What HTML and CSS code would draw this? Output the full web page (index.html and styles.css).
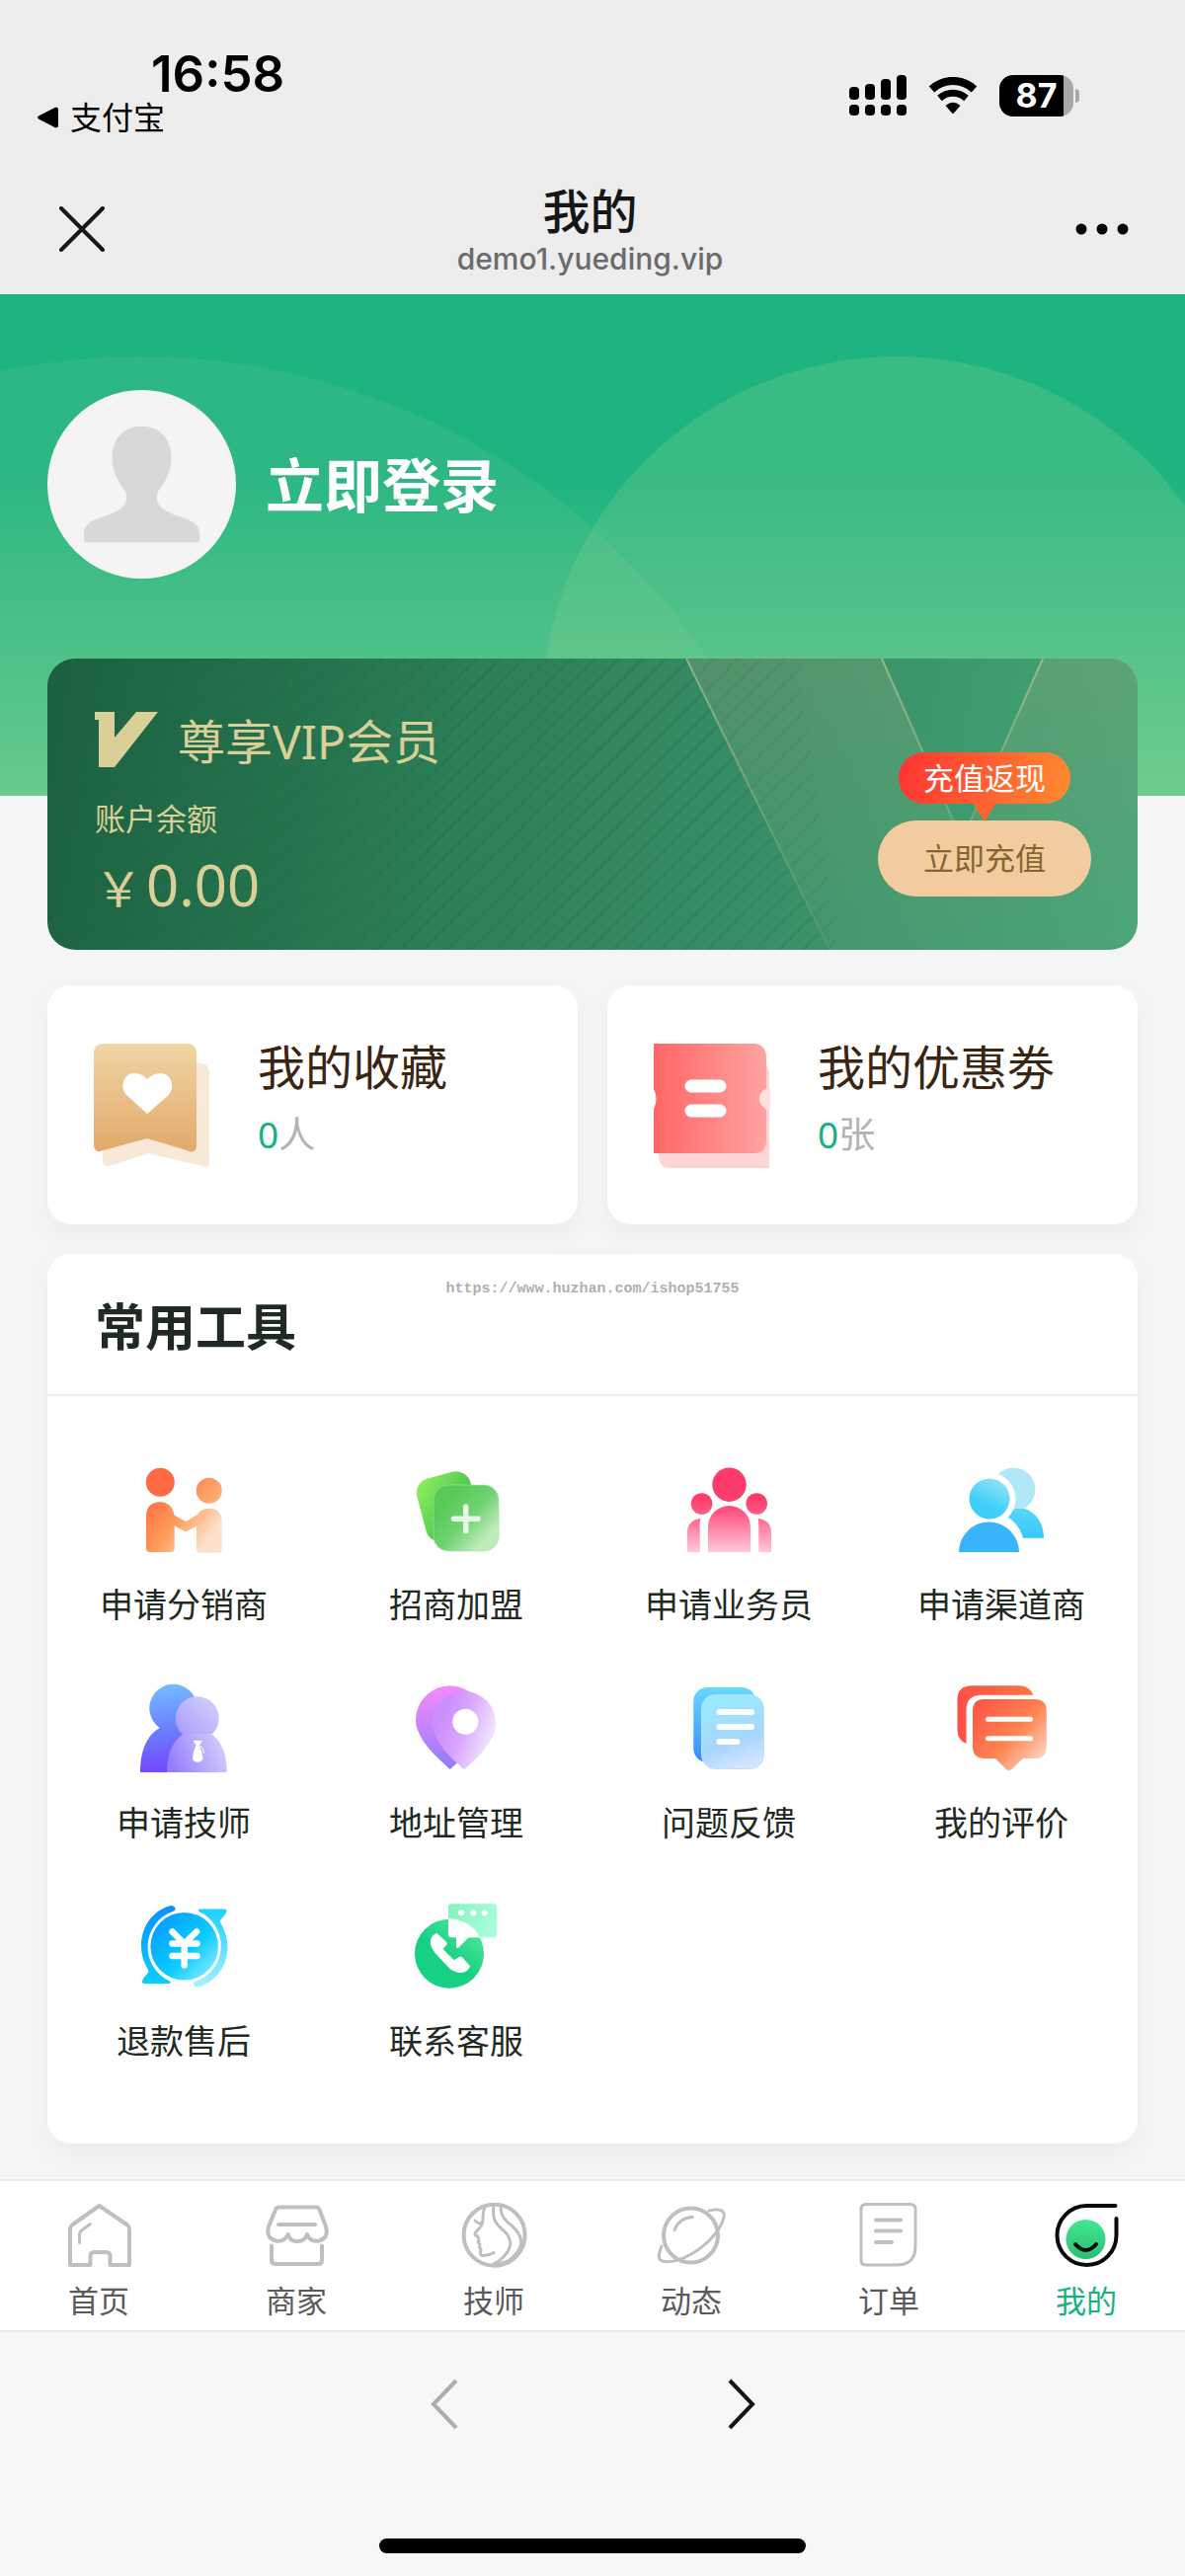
FILE: index.html
```html
<!DOCTYPE html>
<html lang="zh-CN">
<head>
    <meta charset="UTF-8">
    <meta name="viewport" content="width=device-width, initial-scale=1.0">
    <title>我的</title>
    <link rel="stylesheet" href="styles.css">
</head>
<body>

<header class="top">
    <div class="status-bar">
        <div class="status-left">
            <div class="time">16:58</div>
            <a class="back-app" href="#">
                <svg width="21" height="22" viewBox="0 0 21 22"><path d="M1 9.5L18 .8Q21 0 21 3V19Q21 22 18 21.2L1 12.5Q-.8 11 1 9.5Z" fill="#000"/></svg>
                支付宝
            </a>
        </div>
        <div class="status-right">
            <svg width="58" height="42" viewBox="0 0 58 42">
                <rect x="0" y="12" width="10" height="13" rx="4"/>
                <rect x="16" y="9" width="10" height="16" rx="4"/>
                <rect x="32" y="4" width="10" height="21" rx="4"/>
                <rect x="48" y="0" width="10" height="25" rx="4"/>
                <rect x="0" y="30" width="10" height="11" rx="4"/>
                <rect x="16" y="30" width="10" height="11" rx="4"/>
                <rect x="32" y="30" width="10" height="11" rx="4"/>
                <rect x="48" y="30" width="10" height="11" rx="4"/>
            </svg>
            <svg width="50" height="38" viewBox="0 0 50 38">
                <path d="M3.5 12.5C15.5 1 34.5 1 46.5 12.5" fill="none" stroke="#000" stroke-width="8"/>
                <path d="M11.5 21.5C19.5 14.5 30.5 14.5 38.5 21.5" fill="none" stroke="#000" stroke-width="7"/>
                <path d="M17.5 29Q25 22.5 32.5 29L26 36.5Q25 37.5 24 36.5Z" fill="#000"/>
            </svg>
            <div class="battery"><span>87</span></div>
        </div>
    </div>
    <div class="nav-bar">
        <button class="icon-btn" aria-label="关闭">
            <svg width="46" height="46" viewBox="0 0 46 46"><path d="M2 2L44 44M44 2L2 44" stroke="#161616" stroke-width="4" stroke-linecap="round"/></svg>
        </button>
        <div class="nav-title">
            <h1>我的</h1>
            <p>demo1.yueding.vip</p>
        </div>
        <button class="icon-btn" aria-label="更多">
            <svg width="54" height="12" viewBox="0 0 54 12"><circle cx="6" cy="6" r="5.5"/><circle cx="27" cy="6" r="5.5"/><circle cx="48" cy="6" r="5.5"/></svg>
        </button>
    </div>
</header>

<main>
    <section class="hero">
        <svg class="hero-bg" viewBox="0 0 1200 507" preserveAspectRatio="xMidYMid slice">
            <circle cx="143" cy="754" r="691" fill="#8fcf95" fill-opacity=".13"/>
            <circle cx="907" cy="421" r="358" fill="#a5d795" fill-opacity=".2"/>
        </svg>
        <a class="login" href="#">
            <svg class="avatar" viewBox="0 0 192 192">
                <circle cx="96" cy="96" r="96" fill="#f4f4f4"/>
                <path d="M96 37C114 37 126 49 126 69C126 84 119 95 112 104C109 120 120 124 138 130C150 134 155 139 155 147V152Q155 155 152 155H40Q37 155 37 152V147C37 139 42 134 54 130C72 124 83 120 80 104C73 95 66 84 66 69C66 49 78 37 96 37Z" fill="#d8d8d8"/>
            </svg>
            立即登录
        </a>
    </section>

    <section class="vip">
        <svg class="vip-bg" viewBox="0 0 1104 295" preserveAspectRatio="xMaxYMid slice">
            <defs>
                <pattern id="lines" width="17" height="17" patternUnits="userSpaceOnUse" patternTransform="rotate(45)">
                    <rect width="3" height="17" fill="#1c5c42" fill-opacity=".16"/>
                </pattern>
                <linearGradient id="vBand" x1="0" y1="0" x2="0" y2="1">
                    <stop offset="0" stop-color="#a9a67c" stop-opacity=".26"/>
                    <stop offset="1" stop-color="#6fae7c" stop-opacity=".16"/>
                </linearGradient>
                <linearGradient id="vEdge" x1="0" y1="0" x2="0" y2="1">
                    <stop offset="0" stop-color="#d0cb98" stop-opacity=".6"/>
                    <stop offset="1" stop-color="#8fb98b" stop-opacity=".15"/>
                </linearGradient>
            </defs>
            <path d="M0 0H760L800 295H0Z" fill="url(#lines)"/>
            <path d="M647 0H845L926 184L1008 0H1104V295H792Z" fill="url(#vBand)"/>
            <path d="M647 0L792 295M845 0L926 184M1008 0L926 184" fill="none" stroke="url(#vEdge)" stroke-width="2"/>
        </svg>
        <div class="vip-info">
            <h2>
                <svg width="64" height="56" viewBox="0 0 64 56"><path d="M0 0H20V26L42 0H64L20 56H4V8H0Z" fill="#dacf97"/></svg>
                尊享VIP会员
            </h2>
            <p class="balance-label">账户余额</p>
            <p class="balance"><span>￥</span>0.00</p>
        </div>
        <div class="recharge">
            <span class="bubble">充值返现</span>
            <button class="recharge-btn">立即充值</button>
        </div>
    </section>

    <section class="cards">
        <a class="card" href="#">
            <svg width="118" height="126" viewBox="0 0 118 126">
                <defs>
                    <linearGradient id="gold" x1="0" y1="0" x2="0" y2="1"><stop offset="0" stop-color="#f1d5a6"/><stop offset="1" stop-color="#e1aa6a"/></linearGradient>
                </defs>
                <path d="M9 20H108Q117 20 117 30V120Q117 127 110 124L55 111L16 124Q9 125 9 117Z" fill="#f8e8d8"/>
                <path d="M10 0H94Q104 0 104 10V102Q104 113 94 108L54 96L10 108Q0 112 0 102V10Q0 0 10 0Z" fill="url(#gold)"/>
                <path d="M54 71L33 52C26 44 30 30 41 30Q49 30 54 36Q60 30 67 30C78 30 83 43 76 52Z" fill="#fff"/>
            </svg>
            <span class="card-text">
                <strong>我的收藏</strong>
                <span class="count"><b>0</b>人</span>
            </span>
        </a>
        <a class="card" href="#">
            <svg width="118" height="126" viewBox="0 0 118 126">
                <defs>
                    <linearGradient id="coral" x1="0" y1="0" x2="1" y2="0"><stop offset="0" stop-color="#ff6766"/><stop offset="1" stop-color="#ffa3a1"/></linearGradient>
                </defs>
                <path d="M5 20H108Q117 20 117 32V126H16Q5 126 5 112Z" fill="#fed4d5"/>
                <path d="M0 0H103Q114 2 114 14V98Q114 110 103 111H0V66Q5 56 0 46Z" fill="url(#coral)"/>
                <path d="M118 45A11 11 0 1 0 118 67Z" fill="#fee0e0"/>
                <path d="M38 43H67M38 68H67" stroke="#fff" stroke-width="13" stroke-linecap="round"/>
            </svg>
            <span class="card-text">
                <strong>我的优惠劵</strong>
                <span class="count"><b>0</b>张</span>
            </span>
        </a>
    </section>

    <section class="tools">
        <h2>常用工具</h2>
        <span class="watermark">https://www.huzhan.com/ishop51755</span>
        <div class="tool-grid">
            <a class="tool" href="#">
                <svg viewBox="0 0 108 108">
                    <defs>
                        <linearGradient id="t1" gradientUnits="userSpaceOnUse" x1="18" y1="38" x2="86" y2="88"><stop offset="0" stop-color="#fe6a44"/><stop offset=".48" stop-color="#fd9f5c"/><stop offset=".9" stop-color="#fde0c9"/></linearGradient>
                        <linearGradient id="t1b" x1="0" y1="0" x2="1" y2="1"><stop offset="0" stop-color="#fd8b4e"/><stop offset="1" stop-color="#feb57a"/></linearGradient>
                    </defs>
                    <circle cx="30.3" cy="26.3" r="14.5" fill="#fe6b43"/>
                    <circle cx="79.7" cy="34.7" r="13" fill="url(#t1b)"/>
                    <path d="M16 61Q16 46.3 30.3 46.3Q42 46.5 44.7 59.7L56.3 66L68 59Q72 52.7 80 52.7Q92.7 53 92.7 66V94Q92.7 97.5 89.2 97.5H70.5Q67 97.5 67 94V71L58 75.5Q56 76.5 54 75.5L44.7 70.3V93.5Q44.7 97 41.2 97H19.5Q16 97 16 93.5Z" fill="url(#t1)"/>
                </svg>
                申请分销商
            </a>
            <a class="tool" href="#">
                <svg viewBox="0 0 108 108">
                    <defs>
                        <linearGradient id="t2" x1="0" y1="0" x2=".7" y2=".8"><stop offset="0" stop-color="#93f45e"/><stop offset="1" stop-color="#3fb950"/></linearGradient>
                        <linearGradient id="t2b" x1=".25" y1=".2" x2="1" y2=".9"><stop offset="0" stop-color="#58cb57"/><stop offset=".4" stop-color="#70d172"/><stop offset=".8" stop-color="#bdebba"/></linearGradient>
                    </defs>
                    <rect x="18" y="18" width="56" height="66" rx="15" fill="url(#t2)" transform="rotate(-15 46 51)"/>
                    <rect x="31" y="29" width="66" height="67" rx="15" fill="url(#t2b)" stroke="#a5e3a3" stroke-opacity=".6"/>
                    <path d="M63.7 51V75.5M51.5 63.3H76" stroke="#e6f8e5" stroke-width="5.5" stroke-linecap="round"/>
                </svg>
                招商加盟
            </a>
            <a class="tool" href="#">
                <svg viewBox="0 0 108 108">
                    <defs>
                        <linearGradient id="t3" gradientUnits="userSpaceOnUse" x1="0" y1="42" x2="0" y2="97"><stop offset="0" stop-color="#fe3c6c"/><stop offset=".3" stop-color="#fe5c86"/><stop offset="1" stop-color="#fec9da"/></linearGradient>
                    </defs>
                    <g fill="url(#t3)">
                        <circle cx="54.5" cy="28.7" r="17.2"/>
                        <circle cx="26.6" cy="48" r="10.8"/>
                        <circle cx="82.2" cy="48" r="10.8"/>
                        <path d="M33 97V71.5A21.5 21.5 0 0 1 76 71.5V97Z"/>
                        <path d="M12 97V77Q12 65 25.5 62.7Q24.7 65 24.7 70V97Z"/>
                        <path d="M97 97V77Q97 65 83.5 62.7Q84.3 65 84.3 70V97Z"/>
                    </g>
                </svg>
                申请业务员
            </a>
            <a class="tool" href="#">
                <svg viewBox="0 0 108 108">
                    <defs>
                        <linearGradient id="t4" x1=".8" y1="0" x2=".3" y2="1"><stop offset="0" stop-color="#93e5f7"/><stop offset=".7" stop-color="#3fcdf9"/></linearGradient>
                        <linearGradient id="t4b" x1="0" y1="0" x2="0" y2="1"><stop offset="0" stop-color="#55d8f8"/><stop offset="1" stop-color="#38c6fb"/></linearGradient>
                    </defs>
                    <circle cx="66.4" cy="33.5" r="22" fill="#b0e8f8"/>
                    <path d="M58 60L68 53H77.7C90 57 97 69 97 82.7H76C74 75 69 67 61 62Z" fill="url(#t4b)"/>
                    <circle cx="42" cy="43" r="26.5" fill="#fff"/>
                    <circle cx="42" cy="43" r="20.5" fill="url(#t4)"/>
                    <path d="M11 97A30.5 30.5 0 0 1 72 97Z" fill="#3ab3fd"/>
                </svg>
                申请渠道商
            </a>
            <a class="tool" href="#">
                <svg viewBox="0 0 108 108">
                    <defs>
                        <linearGradient id="t5" gradientUnits="userSpaceOnUse" x1="36" y1="10" x2="46" y2="99"><stop offset="0" stop-color="#76bbff"/><stop offset=".5" stop-color="#6a80fe"/><stop offset="1" stop-color="#7444ff"/></linearGradient>
                        <linearGradient id="t5b" gradientUnits="userSpaceOnUse" x1="90" y1="45" x2="40" y2="95"><stop offset="0" stop-color="#c9c6fe"/><stop offset=".4" stop-color="#b3a8fd"/><stop offset="1" stop-color="#9170fd"/></linearGradient>
                        <linearGradient id="t5c" gradientUnits="userSpaceOnUse" x1="97" y1="65" x2="40" y2="90"><stop offset="0" stop-color="#d8d0fd"/><stop offset=".5" stop-color="#b9a9fc"/><stop offset="1" stop-color="#957bfd"/></linearGradient>
                    </defs>
                    <path d="M29.7 54A24.3 24.3 0 1 1 60 52V99H10C10 78 16 62 29.7 54Z" fill="url(#t5)"/>
                    <circle cx="67.7" cy="44.3" r="22" fill="url(#t5b)"/>
                    <path d="M37 99C37 80 43 67 54 60H81.7C92 67 97.7 80 97.7 99Z" fill="url(#t5c)"/>
                    <path d="M63.5 67H73L70 71.5Q73.5 80 73.5 86Q68 92 63 86Q63 79 66.5 71.5Z" fill="#fff"/>
                    <path d="M71 72Q75 76 74.5 80" fill="none" stroke="#fff"/>
                </svg>
                申请技师
            </a>
            <a class="tool" href="#">
                <svg viewBox="0 0 108 108">
                    <defs>
                        <linearGradient id="t6" x1=".5" y1="0" x2=".5" y2="1"><stop offset="0" stop-color="#f58aff"/><stop offset=".5" stop-color="#c583fb"/><stop offset="1" stop-color="#8e7cfb"/></linearGradient>
                        <linearGradient id="t6b" x1=".15" y1=".3" x2=".9" y2=".6"><stop offset="0" stop-color="#cd8dfd"/><stop offset=".45" stop-color="#d9a5fd"/><stop offset="1" stop-color="#f1e0fd"/></linearGradient>
                    </defs>
                    <path d="M47.7 96C36 85 13 66 13 46A34.7 34.7 0 0 1 82.4 46C82.4 66 59 86 47.7 96Z" fill="url(#t6)"/>
                    <path d="M62 96C51 87 30 68 30 49A32 32 0 0 1 94 49C94 68 73 87 62 96Z" fill="url(#t6b)"/>
                    <circle cx="63.3" cy="47.7" r="13" fill="#fff"/>
                </svg>
                地址管理
            </a>
            <a class="tool" href="#">
                <svg viewBox="0 0 108 108">
                    <defs>
                        <linearGradient id="t7" x1="0" y1="0" x2="0" y2="1"><stop offset="0" stop-color="#67d9fd"/><stop offset="1" stop-color="#368afd"/></linearGradient>
                        <linearGradient id="t7b" x1=".3" y1="0" x2=".6" y2="1"><stop offset="0" stop-color="#98ecfd"/><stop offset=".65" stop-color="#a8d5fe"/><stop offset="1" stop-color="#d5e5fe"/></linearGradient>
                    </defs>
                    <rect x="18.3" y="13" width="63" height="76" rx="14" fill="url(#t7)"/>
                    <rect x="26.5" y="20.5" width="63" height="75" rx="14" fill="url(#t7b)" stroke="#b9e3fe"/>
                    <path d="M44.5 38H77M44.5 53H77M44.5 68H62.5" stroke="#fff" stroke-width="6" stroke-linecap="round"/>
                </svg>
                问题反馈
            </a>
            <a class="tool" href="#">
                <svg viewBox="0 0 108 108">
                    <defs>
                        <linearGradient id="t8" x1=".1" y1=".1" x2="1" y2=".9"><stop offset="0" stop-color="#ff5948"/><stop offset=".5" stop-color="#ff834f"/><stop offset="1" stop-color="#fddcd2"/></linearGradient>
                        <linearGradient id="t8b" x1="0" y1="0" x2="1" y2="0"><stop offset="0" stop-color="#ff4f48"/><stop offset="1" stop-color="#fe7444"/></linearGradient>
                    </defs>
                    <path d="M24 11.3H72Q82 11.3 86.4 20.7H34Q18.5 20.7 18.5 36V70Q9.5 66 9.5 56V26Q9.5 11.3 24 11.3Z" fill="url(#t8b)"/>
                    <path d="M36 25H88Q99.8 25 99.8 37V73Q99.8 85 88 85H76L65 95.5Q61.6 98.5 58.5 95.5L48 85H37Q25 85 25 73V37Q25 25 36 25Z" fill="url(#t8)"/>
                    <path d="M40.5 45.3H83.5M40.5 64.7H83.5" stroke="#fff" stroke-width="5" stroke-linecap="round"/>
                </svg>
                我的评价
            </a>
            <a class="tool" href="#">
                <svg viewBox="0 0 108 108">
                    <defs>
                        <linearGradient id="t9" x1=".1" y1=".1" x2=".9" y2=".9"><stop offset="0" stop-color="#079dff"/><stop offset=".6" stop-color="#0accff"/><stop offset="1" stop-color="#7deaff"/></linearGradient>
                        <linearGradient id="t9b" x1="0" y1="0" x2="0" y2="1"><stop offset="0" stop-color="#0790ff"/><stop offset="1" stop-color="#08ceff"/></linearGradient>
                        <linearGradient id="t9c" x1="0" y1="1" x2="0" y2="0"><stop offset="0" stop-color="#19d0ff"/><stop offset="1" stop-color="#a9f0ff"/></linearGradient>
                    </defs>
                    <circle cx="54.7" cy="54.3" r="34.3" fill="url(#t9)"/>
                    <path d="M41 13C22 18 11 35 11 54C11 63 14 71 18 78Q19 79.5 18 81L13 87Q10 92 15 92H38Q42 91.5 40 89.5A38 38 0 0 1 43.5 18.8Q46 18 45.5 15.5Q44 12.5 41 13Z" fill="url(#t9b)"/>
                    <path d="M41 13C22 18 11 35 11 54C11 63 14 71 18 78Q19 79.5 18 81L13 87Q10 92 15 92H38Q42 91.5 40 89.5A38 38 0 0 1 43.5 18.8Q46 18 45.5 15.5Q44 12.5 41 13Z" fill="url(#t9c)" transform="rotate(180 54.7 54.3)"/>
                    <path d="M42.5 39.5L54.7 51.5L67 39.5M54.7 51V73.5M42.5 51.5H67.5M42.5 64H67.5" fill="none" stroke="#fff" stroke-width="6.5" stroke-linecap="round"/>
                </svg>
                退款售后
            </a>
            <a class="tool" href="#">
                <svg viewBox="0 0 108 108">
                    <defs>
                        <linearGradient id="t10" x1=".9" y1=".1" x2=".5" y2=".6"><stop offset="0" stop-color="#4fe79c"/><stop offset="1" stop-color="#16d083"/></linearGradient>
                        <linearGradient id="t10b" x1="0" y1="0" x2="1" y2=".3"><stop offset="0" stop-color="#83f2b9"/><stop offset="1" stop-color="#a6fddb"/></linearGradient>
                        <clipPath id="call"><circle cx="47" cy="61.7" r="35.5"/></clipPath>
                    </defs>
                    <circle cx="47" cy="61.7" r="35" fill="url(#t10)"/>
                    <rect x="46" y="11.3" width="49.3" height="34" rx="3.5" fill="url(#t10b)"/>
                    <path d="M46 11H95V45.3H66.5L56.5 55.5Q54 57 54 54V45.3H49.5Q46 45.3 46 42Z" fill="#fff" clip-path="url(#call)"/>
                    <circle cx="59.3" cy="20.3" r="3" fill="#fff"/>
                    <circle cx="71.3" cy="20.3" r="3" fill="#fff"/>
                    <circle cx="82.7" cy="20.3" r="3" fill="#fff"/>
                    <path d="M34.3 40.7L44.3 50Q45.5 51.5 44 53L40.5 57L52 68.3L57 65Q58.5 64 60 65.3L68.3 74.5Q65 82 56 81Q51 80 47 76.5L32 60.5Q27 53 28 48Q29 43 34.3 40.7Z" fill="#fff"/>
                </svg>
                联系客服
            </a>
        </div>
    </section>
</main>

<nav class="tab-bar">
    <a class="tab" href="#">
        <svg viewBox="0 0 72 72">
            <path d="M36.5 7L65 26.5Q67 28 67 30.5V67H47.5V58Q47.5 54 43.5 54H31.5Q27.5 54 27.5 58V67H7V30.5Q7 28 9 26.5Z"/>
            <path class="thin" d="M16.5 44.5V36Q16.5 34 18 32.5L27.5 25.5"/>
        </svg>
        首页
    </a>
    <a class="tab" href="#">
        <svg viewBox="0 0 72 72">
            <path d="M19 8.5H56Q58.5 8.5 59.5 11L66 28Q69 40 59 42.5Q50 44 47 36Q45 43 37 43Q29.5 43 27.5 36Q24 44 15.5 42.5Q5 40 8 28L15 11Q16 8.5 19 8.5Z"/>
            <path d="M11 47.5V62Q11 66 15 66H58Q62 66 62 62V47.5"/>
            <path d="M18 26H55"/>
        </svg>
        商家
    </a>
    <a class="tab" href="#">
        <svg viewBox="0 0 72 72">
            <circle cx="36.6" cy="36.7" r="31"/>
            <g class="thin">
                <path d="M27.5 8C23 15 27 22 23 28Q20 31 17 35Q16.500 37 20 38L21 42L20 44L22 46L21.5 49Q24 51 22.5 54Q22 58 26 57.5Q31 57.5 36 54.5"/>
                <path d="M17 22Q20 25 23 25"/>
                <path d="M36 7C34 20 38 26 46 32C54 40 55 47 49 55Q43 63 36 66"/>
                <path d="M43 8C43 18 48 22 55 28C64 36 66 45 61 52C54 62 50 64 40 66"/>
            </g>
        </svg>
        技师
    </a>
    <a class="tab" href="#">
        <svg viewBox="0 0 72 72">
            <circle cx="35.5" cy="37" r="27.5"/>
            <g class="thin">
                <path d="M19 31.5Q24 19 37.5 18.5"/>
                <path d="M54 12C66 9 72 12 68 22C64 34 50 48 36 56C22 64 8 66 4 61Q2 57 6 48"/>
            </g>
        </svg>
        动态
    </a>
    <a class="tab" href="#">
        <svg viewBox="0 0 72 72">
            <path class="thin" d="M13 5.5H58Q63 5.5 63 10.5V48Q63 67 44 67H13Q8 67 8 62V10.5Q8 5.5 13 5.5Z"/>
            <path d="M23 21.5H48M23 32.5H48M23 44H39"/>
        </svg>
        订单
    </a>
    <a class="tab active" href="#">
        <svg viewBox="0 0 72 72">
            <defs><linearGradient id="face" x1="0" y1="0" x2="0" y2="1"><stop offset="0" stop-color="#42e791"/><stop offset="1" stop-color="#27c073"/></linearGradient></defs>
            <path d="M65.5 7H36A30 30 0 1 0 66.5 37V20" stroke="#0a0a0a"/>
            <circle cx="35.5" cy="41" r="20" fill="url(#face)" stroke="none"/>
            <path d="M25 46Q35.5 58 46 46" stroke="#0a0a0a"/>
        </svg>
        我的
    </a>
</nav>

<footer class="browser-bar">
    <div class="history">
        <button class="icon-btn" aria-label="后退" disabled>
            <svg width="28" height="52" viewBox="0 0 28 52"><path d="M26 2L3 26L26 50" fill="none" stroke="#adadad" stroke-width="4"/></svg>
        </button>
        <button class="icon-btn" aria-label="前进">
            <svg width="28" height="52" viewBox="0 0 28 52"><path d="M2 2L25 26L2 50" fill="none" stroke="#161616" stroke-width="4"/></svg>
        </button>
    </div>
    <div class="home-indicator"></div>
</footer>

</body>
</html>
```

FILE: styles.css
```css
* {
    box-sizing: border-box;
}
body {
    margin: 0;
    background-color: #f5f5f5;
    color: #1f2a22;
    font-family: "Noto Sans", "Noto Sans CJK SC", sans-serif;
}
h1, h2, p {
    margin: 0;
    font-weight: normal;
}
a {
    color: inherit;
    text-decoration: none;
}
svg {
    display: block;
    flex: none;
}
button {
    border: none;
    font-family: inherit;
    cursor: pointer;
}
.icon-btn {
    padding: 0;
    background: none;
}

/* status bar and title */
.top {
    background-color: #ededed;
    color: #000;
}
.status-bar {
    display: flex;
    justify-content: space-between;
    align-items: flex-end;
    padding: 48px 113px 0 38px;
}
.time {
    padding-left: 115px;
    font-family: Inter, sans-serif;
    font-size: 51px;
    font-weight: 600;
    line-height: 54px;
}
.back-app {
    display: flex;
    align-items: center;
    gap: 12px;
    font-size: 32px;
    line-height: 34px;
}
.status-right {
    display: flex;
    align-items: center;
    gap: 22px;
    padding-bottom: 18px;
}
.battery {
    position: relative;
    width: 75px;
    height: 42px;
    border-radius: 14px;
    background: linear-gradient(90deg, #000 87%, #a8a8a8 87%);
    color: #fff;
    font-family: Inter, sans-serif;
    font-size: 34px;
    font-weight: 700;
    line-height: 42px;
    text-align: center;
}
.battery::after {
    content: "";
    position: absolute;
    top: 14px;
    right: -6px;
    width: 4px;
    height: 14px;
    border-radius: 0 4px 4px 0;
    background-color: #a8a8a8;
}
.nav-bar {
    display: flex;
    justify-content: space-between;
    align-items: center;
    padding: 48px 57px 18px 60px;
}
.nav-title {
    text-align: center;
}
.nav-title h1 {
    color: #161616;
    font-size: 48px;
    font-weight: 500;
    line-height: 60px;
}
.nav-title p {
    color: #6b6b6b;
    font-family: Inter, sans-serif;
    font-size: 30px;
    font-weight: 500;
    line-height: 36px;
}

/* green header */
.hero {
    position: relative;
    padding: 97px 48px 220px;
    background: linear-gradient(180deg, #1eb480 0%, #1eb480 36%, #62c98d 100%);
}
.hero-bg {
    position: absolute;
    top: 0;
    left: 0;
    width: 100%;
    height: 100%;
}
.login {
    position: relative;
    display: flex;
    align-items: center;
    gap: 30px;
    color: #fff;
    font-size: 59px;
    font-weight: 700;
    line-height: 64px;
}
.avatar {
    width: 191px;
    height: 191px;
}

/* vip card */
.vip {
    position: relative;
    display: flex;
    justify-content: space-between;
    align-items: flex-end;
    margin: -139px 48px 0;
    padding: 54px 47px 36px 48px;
    border-radius: 28px;
    background: linear-gradient(100deg, #1b6040 0%, #2c7f57 38%, #388f67 66%, #45a577 100%);
    color: #dacf97;
    overflow: hidden;
}
.vip-bg {
    position: absolute;
    top: 0;
    left: 0;
    width: 100%;
    height: 100%;
}
.vip-info, .recharge {
    position: relative;
}
.vip h2 {
    display: flex;
    gap: 20px;
    font-size: 48px;
    line-height: 60px;
}
.balance-label {
    margin-top: 26px;
    font-size: 31px;
    line-height: 44px;
}
.balance {
    margin-top: 15px;
    font-size: 58px;
    line-height: 60px;
}
.balance span {
    margin-right: 4px;
    font-size: 48px;
    line-height: 1;
}
.recharge {
    display: flex;
    flex-direction: column;
    align-items: center;
    margin-bottom: 18px;
}
.bubble {
    position: relative;
    margin-bottom: 17px;
    padding: 0 25px;
    border-radius: 26px;
    background: linear-gradient(100deg, #ff3333, #ff8b30);
    color: #fff;
    font-size: 31px;
    line-height: 52px;
}
.bubble::after {
    content: "";
    position: absolute;
    top: 51px;
    left: 50%;
    margin-left: -12px;
    border: 12px solid transparent;
    border-top: 19px solid #fd6231;
    border-bottom: none;
}
.recharge-btn {
    padding: 0 46px;
    border-radius: 39px;
    background-color: #f3cba0;
    color: #86652f;
    font-size: 31px;
    line-height: 77px;
}

/* favourites and coupons */
.cards {
    display: grid;
    grid-template-columns: 1fr 1fr;
    gap: 30px;
    margin: 36px 48px 0;
}
.card {
    display: flex;
    gap: 48px;
    padding: 59px 47px 57px;
    border-radius: 24px;
    background-color: #fff;
    box-shadow: 0 10px 24px rgba(0, 0, 0, 0.04);
}
.card-text strong {
    display: block;
    color: #3a2512;
    font-size: 48px;
    font-weight: normal;
    line-height: 48px;
}
.count {
    display: block;
    margin-top: 18px;
    color: #b3b3b3;
    font-size: 37px;
    line-height: 52px;
}
.count b {
    color: #15b37d;
    font-weight: normal;
}

/* tools */
.tools {
    position: relative;
    margin: 30px 48px 0;
    border-radius: 24px;
    background-color: #fff;
    box-shadow: 0 10px 24px rgba(0, 0, 0, 0.04);
}
.tools h2 {
    padding: 42px 48px 38px;
    border-bottom: 2px solid #ededed;
    color: #1f2a22;
    font-size: 51px;
    font-weight: 700;
    line-height: 62px;
}
.watermark {
    position: absolute;
    top: 26px;
    left: 0;
    width: 100%;
    color: #b0b0b0;
    font-family: "Liberation Mono", monospace;
    font-size: 15px;
    font-weight: 700;
    line-height: 20px;
    text-align: center;
}
.tool-grid {
    display: grid;
    grid-template-columns: repeat(4, 1fr);
    row-gap: 47px;
    padding: 61px 0 80px;
}
.tool {
    display: flex;
    flex-direction: column;
    align-items: center;
    gap: 18px;
    font-size: 34px;
    line-height: 48px;
}
.tool svg {
    width: 108px;
    height: 108px;
}

/* bottom tabs */
.tab-bar {
    display: grid;
    grid-template-columns: repeat(6, 1fr);
    margin-top: 36px;
    padding: 18px 0 10px;
    border-top: 2px solid #ececec;
    border-bottom: 2px solid #e8e8e8;
    background-color: #fff;
}
.tab {
    display: flex;
    flex-direction: column;
    align-items: center;
    gap: 11px;
    color: #5a5a5a;
    font-size: 31px;
    line-height: 40px;
}
.tab svg {
    width: 72px;
    height: 72px;
    fill: none;
    stroke: #bfbfbf;
    stroke-width: 4px;
    stroke-linecap: round;
    stroke-linejoin: round;
}
.tab .thin {
    stroke-width: 3px;
}
.tab.active {
    color: #15b37d;
}

/* browser buttons */
.browser-bar {
    padding: 47px 0 24px;
    background-color: #f7f7f7;
}
.history {
    display: flex;
    justify-content: center;
    gap: 273px;
}
.home-indicator {
    width: 36%;
    height: 15px;
    margin: 110px auto 0;
    border-radius: 8px;
    background-color: #000;
}
```
